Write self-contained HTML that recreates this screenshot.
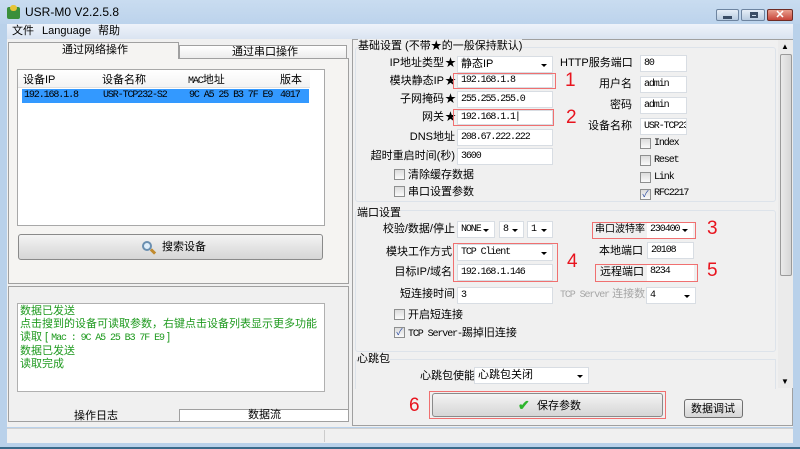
<!DOCTYPE html>
<html><head><meta charset="utf-8"><style>
*{margin:0;padding:0;box-sizing:border-box}
body{width:800px;height:449px;overflow:hidden;background:#b9d1ea;font-family:"Liberation Sans","Noto Sans CJK SC",sans-serif;font-size:11px;color:#000;position:relative}
.a{position:absolute}
.t{position:absolute;white-space:nowrap;line-height:14px}
.in{position:absolute;background:#fff;border:1px solid #d8dde3;height:17px;font-family:"Liberation Mono","Noto Sans CJK SC",monospace;font-size:10px;letter-spacing:-1.1px;padding-left:3px;line-height:15px;white-space:nowrap;overflow:hidden}
.sel::after{content:"";position:absolute;right:5px;top:7px;border-left:3px solid transparent;border-right:3px solid transparent;border-top:3px solid #000}
.cb{position:absolute;width:11px;height:11px;border:1px solid #8e8f8f;background:linear-gradient(#dcdcdc,#fafafa)}
.red{position:absolute;border:1px solid #f07070}
.num{position:absolute;color:#e8141e;font-size:19px;line-height:20px}
.lb{text-align:right}
.mono{font-family:"Liberation Mono","Noto Sans CJK SC",monospace;font-size:10px;letter-spacing:-1.1px}
.btn{position:absolute;border:1px solid #8a8a8a;border-radius:3px;background:linear-gradient(#f4f4f4,#e4e4e4 50%,#d6d6d6)}
</style></head><body>
<div class="a" style="left:0;top:0;width:800px;height:24px;background:linear-gradient(#c9dcf0,#bcd3ec)"></div>
<div class="a" style="left:7px;top:7px;width:13px;height:12px;background:#3a8f3a;border-radius:2px"></div>
<div class="a" style="left:10px;top:5px;width:7px;height:6px;background:#e6c437;border-radius:3px"></div>
<div class="t" style="left:25px;top:5px;font-size:12px">USR-M0 V2.2.5.8</div>
<div class="a" style="left:716px;top:9px;width:23px;height:12px;border:1px solid #6d84a0;border-radius:2px;background:linear-gradient(#e6eef7,#b8cbe0)"><div class="a" style="left:6px;top:6px;width:9px;height:3px;background:#3a4d66"></div></div>
<div class="a" style="left:741px;top:9px;width:24px;height:12px;border:1px solid #6d84a0;border-radius:2px;background:linear-gradient(#e6eef7,#b8cbe0)"><div class="a" style="left:8px;top:2px;width:8px;height:6px;border:2px solid #3a4d66;border-top-width:3px"></div></div>
<div class="a" style="left:767px;top:9px;width:26px;height:12px;border:1px solid #6e2b24;border-radius:2px;background:linear-gradient(#e9a08f,#c7463a);color:#fff;font-weight:bold;font-size:11px;text-align:center;line-height:10px">✕</div>
<div class="a" style="left:7px;top:24px;width:786px;height:15px;background:linear-gradient(#eef3fa,#dae4f1)"></div>
<div class="t" style="left:12px;top:24px">文件</div>
<div class="t" style="left:42px;top:24px">Language</div>
<div class="t" style="left:98px;top:24px">帮助</div>
<div class="a" style="left:7px;top:39px;width:786px;height:388px;background:#f0f0f0"></div>
<div class="a" style="left:8px;top:58px;width:341px;height:226px;border:1px solid #a0a0a0;background:#f5f4f2"></div>
<div class="a" style="left:8px;top:42px;width:171px;height:17px;border:1px solid #a0a0a0;border-bottom:none;background:#f5f4f2"></div>
<div class="t" style="left:62px;top:43px">通过网络操作</div>
<div class="a" style="left:179px;top:45px;width:168px;height:14px;border:1px solid #a0a0a0;background:linear-gradient(#fff,#ececec)"></div>
<div class="t" style="left:232px;top:45px">通过串口操作</div>
<div class="a" style="left:17px;top:69px;width:308px;height:157px;background:#fff;border:1px solid #a8a8a8"></div>
<div class="a" style="left:18px;top:70px;width:292px;height:18px;background:linear-gradient(#fff,#f3f3f3);border-bottom:1px solid #e0e0e0"></div>
<div class="t" style="left:23px;top:73px">设备IP</div>
<div class="t" style="left:102px;top:73px">设备名称</div>
<div class="t" style="left:188px;top:73px"><span class="mono">MAC</span>地址</div>
<div class="t" style="left:280px;top:73px">版本</div>
<div class="a" style="left:22px;top:89px;width:287px;height:14px;background:#3399ff"></div>
<div class="t mono" style="left:24px;top:89px">192.168.1.8</div>
<div class="t mono" style="left:103px;top:89px">USR-TCP232-S2</div>
<div class="t mono" style="left:189px;top:89px">9C A5 25 B3 7F E9</div>
<div class="t mono" style="left:280px;top:89px">4017</div>
<div class="btn" style="left:18px;top:234px;width:305px;height:26px"></div>
<div class="a" style="left:142px;top:241px;width:10px;height:10px;border:2px solid #6a8fb0;border-radius:50%;background:#dfeefa"></div>
<div class="a" style="left:150px;top:250px;width:6px;height:3px;background:#c08a2e;transform:rotate(45deg)"></div>
<div class="t" style="left:162px;top:240px">搜索设备</div>
<div class="a" style="left:8px;top:286px;width:341px;height:136px;border:1px solid #a0a0a0;background:#f0f0f0"></div>
<div class="a" style="left:17px;top:303px;width:308px;height:89px;background:#fff;border:1px solid #b0b0b0"></div>
<div class="a" style="left:20px;top:305px;color:#1f9a1f;line-height:13px;font-size:11px">数据已发送<br>点击搜到的设备可读取参数，右键点击设备列表显示更多功能<br>读取 [ <span class="mono">Mac : 9C A5 25 B3 7F E9</span> ]<br>数据已发送<br>读取完成</div>
<div class="t" style="left:74px;top:409px">操作日志</div>
<div class="a" style="left:179px;top:409px;width:170px;height:13px;border:1px solid #a0a0a0;background:#fff"></div>
<div class="t" style="left:248px;top:408px">数据流</div>
<div class="a" style="left:7px;top:428px;width:786px;height:15px;background:#f0f0f0;border-top:1px solid #d0d0d0"></div>
<div class="a" style="left:324px;top:430px;width:1px;height:12px;background:#ccc"></div>
<div class="a" style="left:352px;top:39px;width:441px;height:387px;border:1px solid #a0a0a0;background:#f0f0f0"></div>
<div class="a" style="left:778px;top:40px;width:15px;height:348px;background:#ebebeb"></div>
<div class="a" style="left:780px;top:54px;width:12px;height:222px;border:1px solid #9a9a9a;border-radius:2px;background:linear-gradient(90deg,#eaeaea,#d6d6d6)"></div>
<div class="t" style="left:781px;top:40px;font-size:8px">▲</div>
<div class="t" style="left:781px;top:375px;font-size:8px">▼</div>
<div class="a" style="left:355px;top:47px;width:421px;height:155px;border:1px solid #dde3ea;border-radius:3px"></div>
<div class="t" style="left:358px;top:39px;background:#f0f0f0">基础设置 (不带★的一般保持默认)</div>
<div class="t lb" style="left:360px;top:56px;width:84px">IP地址类型</div><div class="t" style="left:445px;top:56px">★</div>
<div class="in sel" style="left:457px;top:56px;width:96px;font-family:'Liberation Sans','Noto Sans CJK SC',sans-serif;font-size:11px;letter-spacing:0">静态IP</div>
<div class="t lb" style="left:360px;top:74px;width:84px">模块静态IP</div><div class="t" style="left:445px;top:74px">★</div>
<div class="in" style="left:457px;top:74px;width:96px;height:14px;line-height:12px">192.168.1.8</div>
<div class="red" style="left:453px;top:73px;width:103px;height:16px"></div><div class="num" style="left:565px;top:71px">1</div>
<div class="t lb" style="left:360px;top:92px;width:84px">子网掩码</div><div class="t" style="left:445px;top:92px">★</div>
<div class="in" style="left:457px;top:91px;width:96px">255.255.255.0</div>
<div class="t lb" style="left:360px;top:110px;width:84px">网关</div><div class="t" style="left:445px;top:110px">★</div>
<div class="in" style="left:457px;top:110px;width:96px;height:15px;line-height:13px">192.168.1.1|</div>
<div class="red" style="left:453px;top:109px;width:101px;height:17px"></div><div class="num" style="left:566px;top:108px">2</div>
<div class="t lb" style="left:360px;top:130px;width:95px">DNS地址</div>
<div class="in" style="left:457px;top:129px;width:96px">208.67.222.222</div>
<div class="t lb" style="left:360px;top:149px;width:95px">超时重启时间(秒)</div>
<div class="in" style="left:457px;top:148px;width:96px">3600</div>
<div class="cb" style="left:394px;top:169px"></div><div class="t" style="left:408px;top:168px">清除缓存数据</div>
<div class="cb" style="left:394px;top:186px"></div><div class="t" style="left:408px;top:185px">串口设置参数</div>
<div class="t lb" style="left:560px;top:56px;width:72px">HTTP服务端口</div>
<div class="in" style="left:640px;top:55px;width:47px">80</div>
<div class="t lb" style="left:560px;top:77px;width:72px">用户名</div>
<div class="in" style="left:640px;top:76px;width:47px">admin</div>
<div class="t lb" style="left:560px;top:98px;width:72px">密码</div>
<div class="in" style="left:640px;top:97px;width:47px">admin</div>
<div class="t lb" style="left:560px;top:119px;width:72px">设备名称</div>
<div class="in" style="left:640px;top:118px;width:47px">USR-TCP23</div>
<div class="cb" style="left:640px;top:138px"></div><div class="t mono" style="left:654px;top:137px">Index</div>
<div class="cb" style="left:640px;top:155px"></div><div class="t mono" style="left:654px;top:154px">Reset</div>
<div class="cb" style="left:640px;top:172px"></div><div class="t mono" style="left:654px;top:171px">Link</div>
<div class="cb" style="left:640px;top:189px;font-size:9px;line-height:9px;color:#2a4aa0;text-align:center">✓</div><div class="t mono" style="left:654px;top:187px">RFC2217</div>
<div class="a" style="left:355px;top:210px;width:421px;height:142px;border:1px solid #dde3ea;border-radius:3px"></div>
<div class="t" style="left:357px;top:206px;background:#f0f0f0">端口设置</div>
<div class="t lb" style="left:360px;top:222px;width:95px">校验/数据/停止</div>
<div class="in sel" style="left:457px;top:221px;width:38px">NONE</div>
<div class="in sel" style="left:499px;top:221px;width:25px">8</div>
<div class="in sel" style="left:527px;top:221px;width:26px">1</div>
<div class="t lb" style="left:360px;top:245px;width:92px">模块工作方式</div>
<div class="in sel" style="left:457px;top:244px;width:96px">TCP Client</div>
<div class="t lb" style="left:360px;top:265px;width:92px">目标IP/域名</div>
<div class="in" style="left:457px;top:264px;width:96px">192.168.1.146</div>
<div class="red" style="left:453px;top:243px;width:105px;height:39px"></div><div class="num" style="left:567px;top:252px">4</div>
<div class="t lb" style="left:360px;top:287px;width:95px">短连接时间</div>
<div class="in" style="left:457px;top:287px;width:96px">3</div>
<div class="cb" style="left:394px;top:309px"></div><div class="t" style="left:408px;top:308px">开启短连接</div>
<div class="cb" style="left:394px;top:327px;font-size:9px;line-height:9px;color:#2a4aa0;text-align:center">✓</div><div class="t" style="left:408px;top:326px"><span class="mono">TCP Server-</span>踢掉旧连接</div>
<div class="t" style="left:595px;top:223px;font-size:10px">串口波特率</div>
<div class="in sel" style="left:647px;top:222px;width:46px;border:none">230400</div>
<div class="red" style="left:592px;top:222px;width:104px;height:17px"></div><div class="num" style="left:707px;top:219px">3</div>
<div class="t lb" style="left:580px;top:244px;width:63px">本地端口</div>
<div class="in" style="left:647px;top:242px;width:47px">20108</div>
<div class="t" style="left:600px;top:265px">远程端口</div>
<div class="in" style="left:647px;top:264px;width:47px;border:none">8234</div>
<div class="red" style="left:595px;top:264px;width:103px;height:18px"></div><div class="num" style="left:707px;top:261px">5</div>
<div class="t" style="left:560px;top:287px;color:#a6a6a6"><span class="mono">TCP Server</span> 连接数</div>
<div class="in sel" style="left:646px;top:287px;width:50px">4</div>
<div class="a" style="left:355px;top:359px;width:421px;height:30px;border:1px solid #dde3ea;border-top-left-radius:3px;border-bottom:none"></div>
<div class="t" style="left:357px;top:352px;background:#f0f0f0">心跳包</div>
<div class="t" style="left:420px;top:369px">心跳包使能</div>
<div class="in sel" style="left:474px;top:367px;width:115px;font-family:'Liberation Sans','Noto Sans CJK SC',sans-serif;font-size:11px;letter-spacing:0">心跳包关闭</div>
<div class="red" style="left:429px;top:391px;width:237px;height:28px"></div>
<div class="btn" style="left:432px;top:393px;width:231px;height:24px"></div>
<div class="t" style="left:518px;top:398px;color:#2db52d;font-size:14px;font-weight:bold">✔</div>
<div class="t" style="left:537px;top:399px">保存参数</div>
<div class="num" style="left:409px;top:396px">6</div>
<div class="btn" style="left:684px;top:399px;width:59px;height:19px;border-color:#707070"></div>
<div class="t" style="left:691px;top:402px">数据调试</div>
<div class="a" style="left:0;top:444px;width:800px;height:5px;background:#b9d1ea"></div>
<div class="a" style="left:0;top:447px;width:800px;height:2px;background:#3a6a8a"></div>
</body></html>
